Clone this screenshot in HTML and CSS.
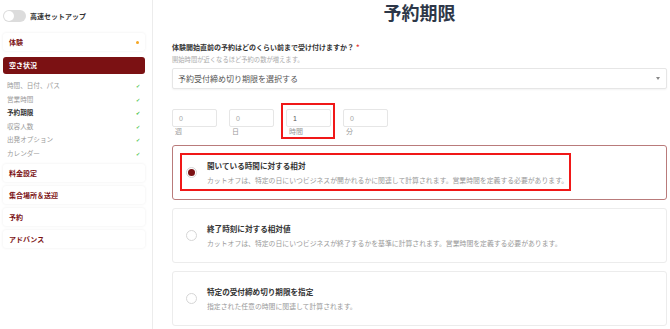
FILE: index.html
```html
<!DOCTYPE html>
<html lang="ja">
<head>
    <meta charset="UTF-8">
    <meta name="viewport" content="width=device-width, initial-scale=1.0">
    <title>予約期限</title>
    <link rel="stylesheet" href="styles.css">
</head>
<body>
    <aside class="sidebar">
        <div class="quick-setup">
            <span class="toggle"><span class="knob"></span></span>
            <span>高速セットアップ</span>
        </div>

        <div class="nav-card">
            <span>体験</span>
            <span class="dot"></span>
        </div>
        <div class="nav-active">空き状況</div>
        <ul class="sub-nav">
            <li><span>時間、日付、パス</span><span class="check">✔</span></li>
            <li><span>営業時間</span><span class="check">✔</span></li>
            <li class="current"><span>予約期限</span><span class="check">✔</span></li>
            <li><span>収容人数</span><span class="check">✔</span></li>
            <li><span>出発オプション</span><span class="check">✔</span></li>
            <li><span>カレンダー</span><span class="check">✔</span></li>
        </ul>
        <div class="nav-group">
            <div class="nav-card">料金設定</div>
            <div class="nav-card">集合場所＆送迎</div>
            <div class="nav-card">予約</div>
            <div class="nav-card">アドバンス</div>
        </div>
    </aside>

    <main class="content">
        <h1>予約期限</h1>

        <div class="question">体験開始直前の予約はどのくらい前まで受け付けますか？<span class="req">*</span></div>
        <div class="hint">開始時間が近くなるほど予約の数が増えます。</div>

        <div class="select">
            <span>予約受付締め切り期限を選択する</span>
            <span class="caret"></span>
        </div>

        <div class="duration">
            <div class="field">
                <div class="num">0</div>
                <div class="unit">週</div>
            </div>
            <div class="field">
                <div class="num">0</div>
                <div class="unit">日</div>
            </div>
            <div class="field marked">
                <div class="num">1</div>
                <div class="unit">時間</div>
            </div>
            <div class="field">
                <div class="num">0</div>
                <div class="unit">分</div>
            </div>
        </div>

        <div class="options">
            <div class="option selected">
                <div class="option-body marked-box">
                    <span class="radio"><span class="radio-dot"></span></span>
                    <div>
                        <div class="option-title">開いている時間に対する相対</div>
                        <div class="option-desc">カットオフは、特定の日にいつビジネスが開かれるかに関連して計算されます。営業時間を定義する必要があります。</div>
                    </div>
                </div>
            </div>
            <div class="option">
                <div class="option-body">
                    <span class="radio"></span>
                    <div>
                        <div class="option-title">終了時刻に対する相対値</div>
                        <div class="option-desc">カットオフは、特定の日にいつビジネスが終了するかを基準に計算されます。営業時間を定義する必要があります。</div>
                    </div>
                </div>
            </div>
            <div class="option">
                <div class="option-body">
                    <span class="radio"></span>
                    <div>
                        <div class="option-title">特定の受付締め切り期限を指定</div>
                        <div class="option-desc">指定された任意の時間に関連して計算されます。</div>
                    </div>
                </div>
            </div>
        </div>
    </main>
</body>
</html>
```

FILE: styles.css
```css
/* Global */
body {
    margin: 0;
    display: flex;
    min-height: 329px;
    font-family: 'Noto Sans CJK JP', 'Noto Sans', sans-serif;
    color: #333;
    background: #fff;
    overflow: hidden;
}

/* Sidebar */
.sidebar {
    width: 142px;
    flex-shrink: 0;
    padding: 10px 7px 0 3px;
    border-right: 1px solid #ececec;
}

.quick-setup {
    display: flex;
    align-items: center;
    gap: 4px;
    height: 12px;
    font-size: 7px;
    font-weight: bold;
    color: #333;
}

.toggle {
    width: 23px;
    height: 12px;
    border-radius: 6px;
    background: #dcdcdc;
    position: relative;
}

.toggle .knob {
    position: absolute;
    left: 1px;
    top: 1px;
    width: 10px;
    height: 10px;
    border-radius: 50%;
    background: #fff;
}

.nav-card {
    display: flex;
    justify-content: space-between;
    align-items: center;
    height: 18px;
    padding: 0 6px;
    margin-top: 11px;
    font-size: 7px;
    font-weight: bold;
    color: #7b1113;
    background: #fff;
    border-radius: 3px;
    box-shadow: 0 0 3px rgba(0, 0, 0, 0.07);
}

.dot {
    width: 3px;
    height: 3px;
    border-radius: 50%;
    background: #f5a623;
}

.nav-active {
    height: 17px;
    line-height: 17px;
    margin-top: 6px;
    padding: 0 6px;
    font-size: 7px;
    font-weight: bold;
    color: #fff;
    background: #7b1113;
    border-radius: 3px;
}

.sub-nav {
    list-style: none;
    margin: 5px 0 0;
    padding: 0 5px 0 4px;
}

.sub-nav li {
    display: flex;
    justify-content: space-between;
    height: 13.6px;
    line-height: 13.6px;
    font-size: 6.6px;
    color: #999;
}

.sub-nav li.current {
    color: #333;
    font-weight: bold;
}

.check {
    color: #5cc85c;
    font-size: 5px;
}

.nav-group {
    display: flex;
    flex-direction: column;
    gap: 4px;
    margin-top: 3px;
}

.nav-group .nav-card {
    margin-top: 0;
}

/* Main content */
.content {
    flex: 1;
    padding: 0 3px 0 19px;
}

h1 {
    margin: 0;
    height: 24px;
    line-height: 24px;
    text-align: center;
    font-size: 18px;
    font-weight: bold;
    color: #2d3748;
}

.question {
    margin-top: 18px;
    font-size: 7px;
    line-height: 10px;
    font-weight: bold;
    color: #333;
}

.req {
    color: #e53935;
    margin-left: 2px;
}

.hint {
    margin-top: 3px;
    font-size: 6.3px;
    line-height: 10px;
    color: #aaa;
}

.select {
    display: flex;
    justify-content: space-between;
    align-items: center;
    height: 19px;
    margin-top: 3px;
    padding: 0 6px 0 5px;
    font-size: 8px;
    color: #555;
    border: 1px solid #e6e6e6;
    border-radius: 2px;
    box-shadow: 0 1px 2px rgba(0, 0, 0, 0.05);
}

.caret {
    width: 0;
    height: 0;
    border-left: 2.5px solid transparent;
    border-right: 2.5px solid transparent;
    border-top: 3px solid #888;
}

/* Duration inputs */
.duration {
    display: flex;
    gap: 12px;
    margin-top: 20px;
}

.field {
    width: 45px;
    position: relative;
}

.num {
    height: 18px;
    line-height: 18px;
    padding: 0 6px;
    font-family: 'Liberation Sans', sans-serif;
    font-size: 7px;
    color: #a8a8a8;
    border: 1px solid #e6e6e6;
    border-radius: 2px;
    box-sizing: border-box;
}

.field.marked .num {
    color: #555;
}

.unit {
    padding-left: 3px;
    font-size: 7px;
    line-height: 9px;
    color: #999;
}

.marked::after {
    content: "";
    position: absolute;
    inset: -6px -4px -3px -5px;
    border: 2px solid #f01818;
}

/* Options */
.options {
    display: flex;
    flex-direction: column;
    gap: 8px;
    margin-top: 9px;
}

.option {
    height: 55px;
    box-sizing: border-box;
    display: flex;
    align-items: center;
    padding: 0 13px;
    border: 1px solid #ececec;
    border-radius: 3px;
}

.option.selected {
    border: 1.5px solid #b97b7b;
}

.option-body {
    display: inline-flex;
    align-items: center;
    gap: 10px;
    position: relative;
}

.marked-box::after {
    content: "";
    position: absolute;
    inset: -7px -3px -6px -6px;
    border: 2px solid #f01818;
}

.radio {
    width: 11px;
    height: 11px;
    box-sizing: border-box;
    border: 1px solid #d6d6d6;
    border-radius: 50%;
    display: flex;
    align-items: center;
    justify-content: center;
    flex-shrink: 0;
}

.radio-dot {
    width: 7px;
    height: 7px;
    border-radius: 50%;
    background: #7b1113;
}

.option-title {
    font-size: 7.6px;
    line-height: 12px;
    font-weight: bold;
    color: #333;
}

.option-desc {
    margin-top: 3px;
    font-size: 6.85px;
    line-height: 10px;
    color: #999;
}
```
